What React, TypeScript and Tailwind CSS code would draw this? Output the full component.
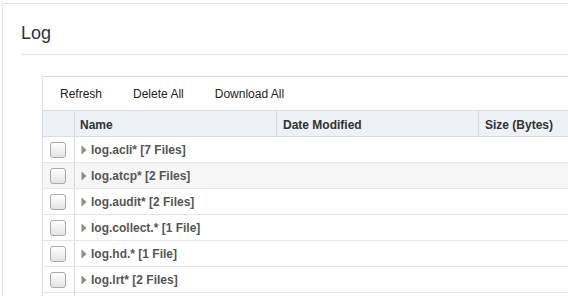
import React from "react";

const rows = [
  "log.acli* [7 Files]",
  "log.atcp* [2 Files]",
  "log.audit* [2 Files]",
  "log.collect.* [1 File]",
  "log.hd.* [1 File]",
  "log.lrt* [2 Files]",
];

function Checkbox() {
  return (
    <div className="w-[16px] h-[16px] rounded-[3px] border border-[#a9a9a9] bg-gradient-to-b from-[#ffffff] to-[#e4e4e4] shadow-[inset_0_1px_0_#fff]" />
  );
}

function Caret() {
  return (
    <svg width="6" height="10" viewBox="0 0 6 10" className="shrink-0">
      <path d="M0.5 0.5 L5.5 5 L0.5 9.5 Z" fill="#8a8a8a" />
    </svg>
  );
}

export default function App() {
  return (
    <div
      className="w-[568px] h-[296px] overflow-hidden bg-white text-[#333]"
      style={{ fontFamily: '"Liberation Sans", Arial, sans-serif' }}
    >
      <div className="ml-[2px] mt-[3px] border-l border-t border-[#dde2e8] h-[400px] pl-[18px]">
        <div className="pt-[19px] h-[43px] text-[18px] leading-[20px] text-[#333]">Log</div>
        <div className="mt-[7px] border-t border-[#dde2e8]" />
        <div className="ml-[21px] mt-[21px] border-l border-t border-[#d8dde3] w-[600px]">
          <div className="h-[33px] flex items-center pl-[17px] gap-[31px] text-[12px] text-[#222]">
            <span>Refresh</span>
            <span>Delete All</span>
            <span>Download All</span>
          </div>
          <div className="flex h-[27px] border-t border-b border-[#d8dde3] bg-[#eef1f5] text-[12px] font-bold text-[#333]">
            <div className="w-[32px] border-r border-[#d3dae2]" />
            <div className="w-[202px] border-r border-[#d3dae2] flex items-center pl-[5px] pt-[2px]">Name</div>
            <div className="w-[202px] border-r border-[#d3dae2] flex items-center pl-[6px] pt-[2px]">Date Modified</div>
            <div className="flex-1 flex items-center pl-[6px] pt-[2px]">Size (Bytes)</div>
          </div>
          {rows.map((r, i) => (
            <div
              key={r}
              className={
                "flex h-[26px] border-b border-[#e6e6e6] " + (i === 1 ? "bg-[#f6f6f6]" : "bg-white")
              }
            >
              <div className="w-[32px] border-r border-[#d3dae2] flex items-center pl-[7px]">
                <Checkbox />
              </div>
              <div className="flex-1 flex items-center pl-[6px] gap-[4px] text-[12px] font-bold text-[#555]">
                <Caret />
                <span>{r}</span>
              </div>
            </div>
          ))}
          <div className="flex h-[26px]">
            <div className="w-[32px] border-r border-[#d3dae2]" />
            <div className="flex-1" />
          </div>
        </div>
      </div>
    </div>
  );
}
